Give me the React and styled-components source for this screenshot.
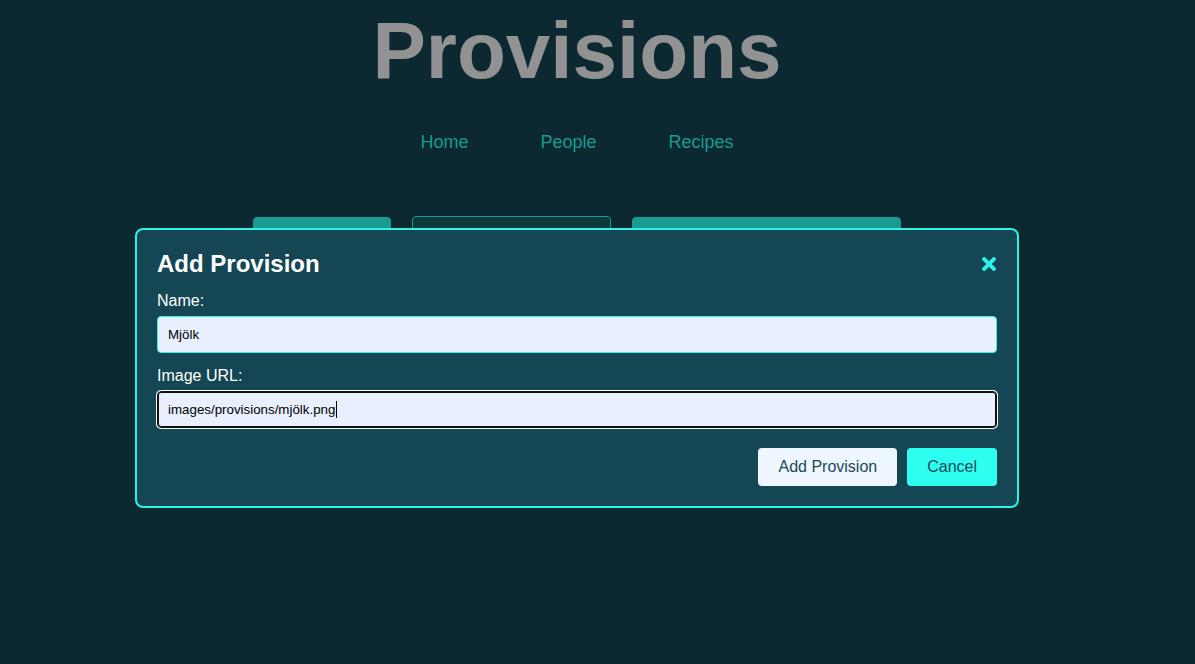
import React from "react";
import styled, { createGlobalStyle } from "styled-components";

const GlobalStyle = createGlobalStyle`
  html, body {
    margin: 0;
    padding: 0;
    background: #0c2932;
    font-family: "Liberation Sans", Arial, sans-serif;
  }
`;

const Page = styled.div`
  position: relative;
  width: 1154px;
  height: 664px;
  display: flex;
  flex-direction: column;
  align-items: center;
`;

const Title = styled.h1`
  margin: 5px 0 0;
  font-size: 80px;
  font-weight: 700;
  color: #929292;
`;

const Nav = styled.nav`
  display: flex;
  gap: 72px;
  margin-top: 35px;
`;

const NavLink = styled.a`
  font-size: 18px;
  color: #1b9a91;
  text-decoration: none;
`;

const Tabs = styled.div`
  display: flex;
  gap: 21px;
  margin-top: 63px;
  align-items: flex-start;
`;

const Tab = styled.button`
  width: ${(p) => p.$w}px;
  height: 40px;
  border-radius: 4px;
  border: 1px solid #1b9a91;
  background: ${(p) => (p.$outline ? "#0d3a38" : "#1b9a91")};
  margin-top: ${(p) => (p.$outline ? 0 : 1)}px;
`;

const Overlay = styled.div`
  position: absolute;
  inset: 0;
  display: flex;
  justify-content: center;
  align-items: flex-start;
  padding-top: 228px;
`;

const Modal = styled.div`
  box-sizing: border-box;
  width: 884px;
  padding: 20px;
  border: 2px solid #2ef2e8;
  border-radius: 8px;
  background: #154653;
  color: #fff;
`;

const Header = styled.div`
  display: flex;
  justify-content: space-between;
  align-items: center;
  margin-bottom: 14px;
`;

const ModalTitle = styled.h2`
  margin: 0;
  font-size: 24px;
  font-weight: 700;
`;

const Close = styled.button`
  background: none;
  border: none;
  padding: 0;
  margin-right: 1px;
  display: flex;
  color: #2ef2e8;
  cursor: pointer;
`;

const Field = styled.div`
  margin-bottom: ${(p) => (p.$last ? 20 : 14)}px;
`;

const Label = styled.label`
  display: block;
  font-size: 16px;
  margin-bottom: 6px;
`;

const InputWrap = styled.div`
  position: relative;
`;

const Input = styled.input`
  box-sizing: border-box;
  width: 100%;
  height: 37px;
  padding: 0 10px;
  font-family: "Liberation Sans", Arial, sans-serif;
  font-size: 13.33px;
  color: #000;
  background: #e8f0fe;
  border: 1px solid ${(p) => (p.$focused ? "#101010" : "#2ef2e8")};
  border-radius: 4px;
  outline: none;
  box-shadow: ${(p) =>
    p.$focused ? "inset 0 0 0 1px #101010, 0 0 0 1px #fff" : "none"};
`;

const Caret = styled.span`
  position: absolute;
  top: 10px;
  left: ${(p) => p.$x}px;
  width: 1px;
  height: 17px;
  background: #000;
`;

const Actions = styled.div`
  display: flex;
  justify-content: flex-end;
  gap: 10px;
`;

const Button = styled.button`
  padding: 10px 20px;
  font-family: "Liberation Sans", Arial, sans-serif;
  font-size: 16px;
  line-height: 18px;
  color: #1b4a55;
  border: none;
  border-radius: 4px;
  background: ${(p) => (p.$primary ? "#2cfff0" : "#eef6ff")};
`;

const CloseIcon = () => (
  <svg width="14" height="14" viewBox="0 80 352 352" fill="currentColor">
    <path d="M242.72 256l100.07-100.07c12.28-12.28 12.28-32.19 0-44.48l-22.24-22.24c-12.28-12.28-32.19-12.28-44.48 0L176 189.28 75.93 89.21c-12.28-12.28-32.19-12.28-44.48 0L9.21 111.45c-12.28 12.28-12.28 32.19 0 44.48L109.28 256 9.21 356.07c-12.28 12.28-12.28 32.19 0 44.48l22.24 22.24c12.28 12.28 32.2 12.28 44.48 0L176 322.72l100.07 100.07c12.28 12.28 32.2 12.28 44.48 0l22.24-22.24c12.28-12.28 12.28-32.19 0-44.48L242.72 256z" />
  </svg>
);

export default function App() {
  return (
    <>
      <GlobalStyle />
      <Page>
        <Title>Provisions</Title>
        <Nav>
          <NavLink href="#">Home</NavLink>
          <NavLink href="#">People</NavLink>
          <NavLink href="#">Recipes</NavLink>
        </Nav>
        <Tabs>
          <Tab $w={138} />
          <Tab $w={199} $outline />
          <Tab $w={269} />
        </Tabs>
        <Overlay>
          <Modal>
            <Header>
              <ModalTitle>Add Provision</ModalTitle>
              <Close aria-label="Close">
                <CloseIcon />
              </Close>
            </Header>
            <Field>
              <Label>Name:</Label>
              <Input defaultValue="Mjölk" />
            </Field>
            <Field $last>
              <Label>Image URL:</Label>
              <InputWrap>
                <Input $focused defaultValue="images/provisions/mjölk.png" />
                <Caret $x={179} />
              </InputWrap>
            </Field>
            <Actions>
              <Button>Add Provision</Button>
              <Button $primary>Cancel</Button>
            </Actions>
          </Modal>
        </Overlay>
      </Page>
    </>
  );
}
